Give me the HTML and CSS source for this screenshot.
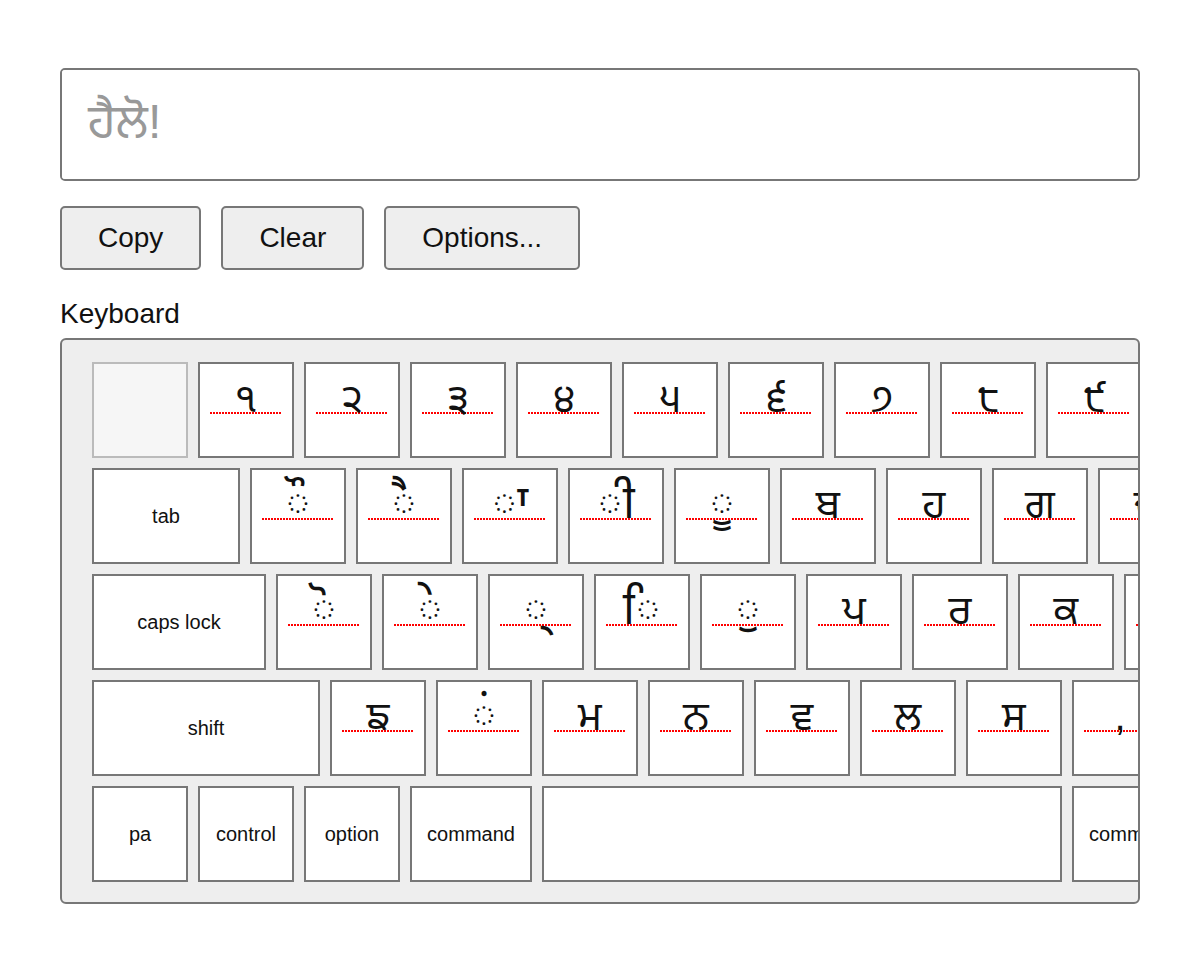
FILE: index.html
```html
<!DOCTYPE html>
<html lang="pa">
<head>
    <meta charset="UTF-8">
    <meta name="viewport" content="width=device-width, initial-scale=1.0">
    <title>Punjabi Keyboard</title>
    <link rel="stylesheet" href="styles.css">
</head>
<body>
    <div class="page">
        <textarea class="editor" placeholder="ਹੈਲੋ!"></textarea>

        <div class="toolbar">
            <button class="toolbar__button">Copy</button>
            <button class="toolbar__button">Clear</button>
            <button class="toolbar__button">Options...</button>
        </div>

        <div class="kb-label">Keyboard</div>
        <div class="kb">
            <div class="kb__row">
                <div class="key key--blank"></div>
                <div class="key"><span class="key__char">੧</span></div>
                <div class="key"><span class="key__char">੨</span></div>
                <div class="key"><span class="key__char">੩</span></div>
                <div class="key"><span class="key__char">੪</span></div>
                <div class="key"><span class="key__char">੫</span></div>
                <div class="key"><span class="key__char">੬</span></div>
                <div class="key"><span class="key__char">੭</span></div>
                <div class="key"><span class="key__char">੮</span></div>
                <div class="key"><span class="key__char">੯</span></div>
            </div>
            <div class="kb__row">
                <div class="key key--tab">tab</div>
                <div class="key"><span class="key__char key__char--mark">◌ੌ</span></div>
                <div class="key"><span class="key__char key__char--mark">◌ੈ</span></div>
                <div class="key"><span class="key__char key__char--mark">◌ਾ</span></div>
                <div class="key"><span class="key__char key__char--mark">◌ੀ</span></div>
                <div class="key"><span class="key__char key__char--mark">◌ੂ</span></div>
                <div class="key"><span class="key__char">ਬ</span></div>
                <div class="key"><span class="key__char">ਹ</span></div>
                <div class="key"><span class="key__char">ਗ</span></div>
                <div class="key"><span class="key__char">ਦ</span></div>
            </div>
            <div class="kb__row">
                <div class="key key--caps">caps lock</div>
                <div class="key"><span class="key__char key__char--mark">◌ੋ</span></div>
                <div class="key"><span class="key__char key__char--mark">◌ੇ</span></div>
                <div class="key"><span class="key__char key__char--mark">◌੍</span></div>
                <div class="key"><span class="key__char key__char--mark">◌ਿ</span></div>
                <div class="key"><span class="key__char key__char--mark">◌ੁ</span></div>
                <div class="key"><span class="key__char">ਪ</span></div>
                <div class="key"><span class="key__char">ਰ</span></div>
                <div class="key"><span class="key__char">ਕ</span></div>
                <div class="key"><span class="key__char"></span></div>
            </div>
            <div class="kb__row">
                <div class="key key--shift">shift</div>
                <div class="key"><span class="key__char">ਙ</span></div>
                <div class="key"><span class="key__char key__char--mark">◌ਂ</span></div>
                <div class="key"><span class="key__char">ਮ</span></div>
                <div class="key"><span class="key__char">ਨ</span></div>
                <div class="key"><span class="key__char">ਵ</span></div>
                <div class="key"><span class="key__char">ਲ</span></div>
                <div class="key"><span class="key__char">ਸ</span></div>
                <div class="key"><span class="key__char">,</span></div>
            </div>
            <div class="kb__row">
                <div class="key">pa</div>
                <div class="key">control</div>
                <div class="key">option</div>
                <div class="key key--cmd">command</div>
                <div class="key key--space"></div>
                <div class="key key--cmd">command</div>
            </div>
        </div>
    </div>
</body>
</html>
```

FILE: styles.css
```css
body {
    margin: 0;
    font-family: "Liberation Sans", "Noto Sans Gurmukhi", "Lohit Gurmukhi", sans-serif;
    color: #111;
    background: #fff;
}
.page {
    padding: 68px 60px 0;
}
.editor {
    display: block;
    box-sizing: border-box;
    width: 100%;
    height: 113px;
    padding: 24px 26px;
    border: 2px solid #777;
    border-radius: 5px;
    font-family: inherit;
    font-size: 48px;
    resize: none;
    outline: none;
}
.editor::placeholder {
    color: #999;
}
.toolbar {
    display: flex;
    gap: 20px;
    margin-top: 25px;
}
.toolbar__button {
    height: 64px;
    padding: 0 36px;
    background-color: #eee;
    border: 2px solid #777;
    border-radius: 5px;
    font-family: inherit;
    font-size: 28px;
    color: #111;
    cursor: pointer;
}
.kb-label {
    margin-top: 28px;
    font-size: 28px;
    line-height: 31px;
}
.kb {
    margin-top: 9px;
    padding: 22px 0 20px 30px;
    background-color: #eee;
    border: 2px solid #777;
    border-radius: 6px;
    overflow: hidden;
    display: flex;
    flex-direction: column;
    gap: 10px;
}
.kb__row {
    display: flex;
    gap: 10px;
}
.key {
    flex: none;
    box-sizing: border-box;
    width: 96px;
    height: 96px;
    border: 2px solid #777;
    background-color: #fff;
    display: flex;
    align-items: center;
    justify-content: center;
    font-size: 20px;
    white-space: nowrap;
}
.key--blank {
    background-color: #f6f6f6;
    border-color: #bbb;
}
.key--tab { width: 148px; }
.key--caps { width: 174px; }
.key--shift { width: 228px; }
.key--cmd { width: 122px; }
.key--space { width: 520px; }
/* the red dots mark the baseline of the glyph */
.key__char {
    align-self: flex-start;
    width: 72px;
    height: 50px;
    line-height: 69px;
    text-align: center;
    font-size: 40px;
    background-image: linear-gradient(to right, red 2px, transparent 2px);
    background-size: 3px 2px;
    background-repeat: repeat-x;
    background-position: left bottom;
}
.key__char--mark {
    font-size: 46px;
    line-height: 65px;
}
```
